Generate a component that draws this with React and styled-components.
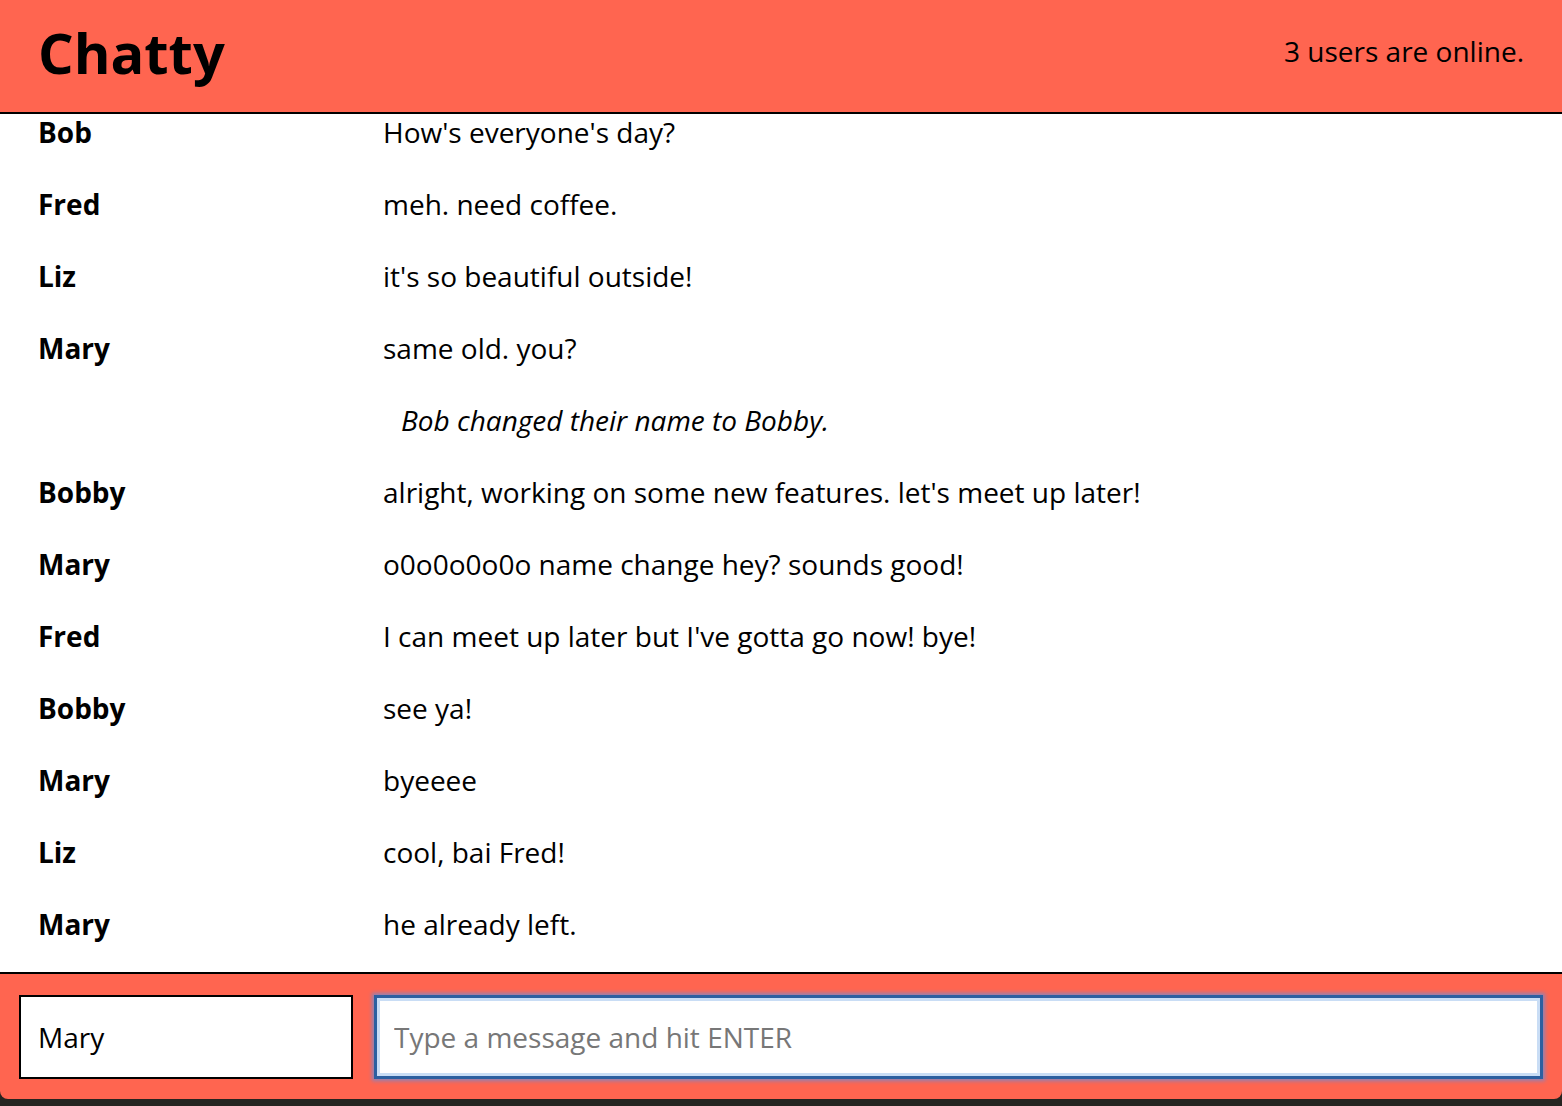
import React from "react";
import styled, { createGlobalStyle } from "styled-components";

const Global = createGlobalStyle`
  html, body { margin: 0; padding: 0; }
  body {
    background: #262420;
    font-family: "Open Sans", "Noto Sans", sans-serif;
    color: #000;
  }
`;

const Page = styled.div`
  height: 1099px;
  display: flex;
  flex-direction: column;
  overflow: hidden;
`;

const NavBar = styled.nav`
  height: 112px;
  flex: none;
  background: #ff6550;
  border-bottom: 2px solid #000;
  display: flex;
  align-items: center;
  justify-content: space-between;
  padding: 0 38px 0 38px;
`;

const Brand = styled.h1`
  margin: 0;
  font-size: 56px;
  font-weight: 700;
  line-height: 1;
  position: relative;
  top: -4px;
`;

const Online = styled.span`
  font-size: 28px;
  position: relative;
  top: -5px;
`;

const Messages = styled.main`
  flex: 1;
  min-height: 0;
  background: #fff;
`;

const Row = styled.div`
  display: flex;
  height: 72px;
  align-items: flex-start;
  font-size: 28px;
  line-height: 36px;
`;

const Username = styled.span`
  width: 345px;
  flex: none;
  padding-left: 38px;
  font-weight: 700;
`;

const Content = styled.span`
  padding-left: ${(p) => (p.$system ? "18px" : "0")};
  font-style: ${(p) => (p.$system ? "italic" : "normal")};
`;

const Footer = styled.footer`
  flex: none;
  height: 124px;
  background: #ff6550;
  border-top: 2px solid #000;
  border-radius: 0 0 8px 8px;
  display: flex;
  align-items: center;
  padding: 1px 19px 0;
  gap: 21px;
`;

const Field = styled.input`
  box-sizing: border-box;
  height: 84px;
  font-family: "Open Sans", sans-serif;
  font-size: 28px;
  padding: 0 17px;
  background: #fff;
  color: #000;
  outline: none;
  border: 2px solid #000;
  width: ${(p) => p.$width || "auto"};
  flex: ${(p) => (p.$grow ? 1 : "none")};
  ${(p) =>
    p.$focused &&
    `
    border: 3px solid #2c5fa0;
    box-shadow: inset 0 0 0 3px #c9ddf5, 0 0 4px 2px #8e82b8;
  `}
  &::placeholder { color: #777; }
`;

const messages = [
  ["Bob", "How's everyone's day?"],
  ["Fred", "meh. need coffee."],
  ["Liz", "it's so beautiful outside!"],
  ["Mary", "same old. you?"],
  [null, "Bob changed their name to Bobby."],
  ["Bobby", "alright, working on some new features. let's meet up later!"],
  ["Mary", "o0o0o0o0o name change hey? sounds good!"],
  ["Fred", "I can meet up later but I've gotta go now! bye!"],
  ["Bobby", "see ya!"],
  ["Mary", "byeeee"],
  ["Liz", "cool, bai Fred!"],
  ["Mary", "he already left."],
];

export default function App() {
  return (
    <Page>
      <Global />
      <NavBar>
        <Brand>Chatty</Brand>
        <Online>3 users are online.</Online>
      </NavBar>
      <Messages>
        {messages.map(([user, text], i) => (
          <Row key={i}>
            <Username>{user}</Username>
            <Content $system={!user}>{text}</Content>
          </Row>
        ))}
      </Messages>
      <Footer>
        <Field $width="334px" defaultValue="Mary" />
        <Field $grow $focused placeholder="Type a message and hit ENTER" />
      </Footer>
    </Page>
  );
}
